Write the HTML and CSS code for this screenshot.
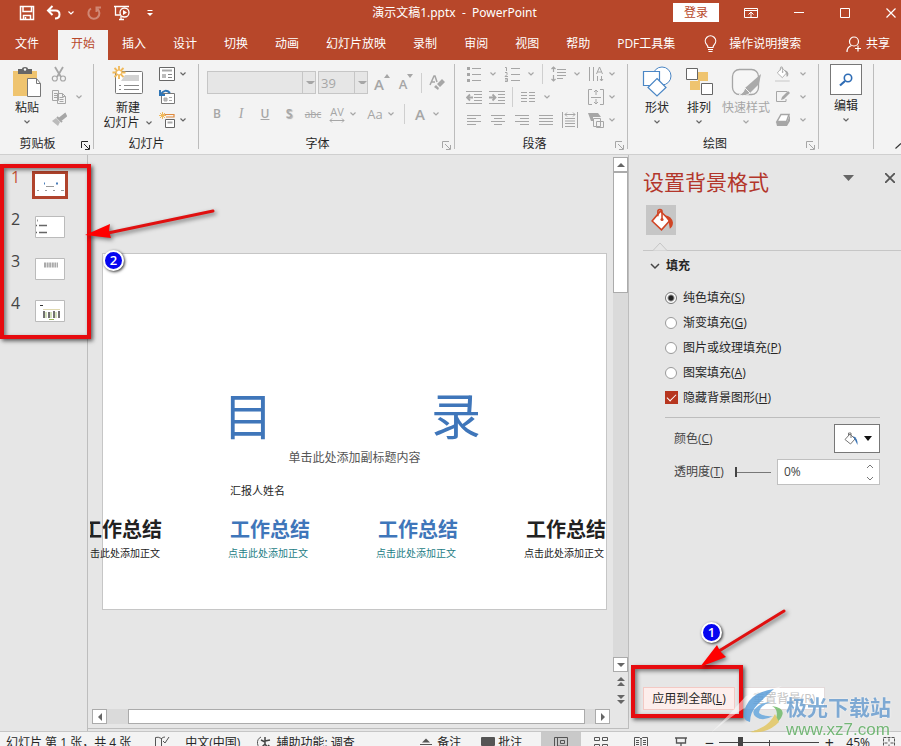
FILE: index.html
```html
<!DOCTYPE html>
<html lang="zh-CN">
  <head>
    <meta charset="utf-8">
    <meta name="viewport" content="width=device-width,initial-scale=1.0"/>
    <title>演示文稿1.pptx - PowerPoint</title>
    <link rel="stylesheet" href="styles.css">
  </head>

  <body>
    <!-- shared icons -->
    <svg class="defs" width="0" height="0">
      <symbol id="chev" viewBox="0 0 8 8"><path d="M1.5 2.5 4 5 6.5 2.5" fill="none" stroke="currentColor" stroke-width="1.2"/></symbol>
      <symbol id="launch" viewBox="0 0 9 9"><path d="M.5 7V.5H7M3 3l5 5M8.5 4v4.500H4" fill="none" stroke="currentColor"/></symbol>
      <symbol id="bucket" viewBox="0 0 24 24">
        <path d="M11 3 3 12.500l9 8.500 8-9z" fill="#fff" stroke="currentColor" stroke-width="1.500"/>
        <path d="M8.500 8V3.500q0-2 2-2t2 2V11" fill="none" stroke="currentColor" stroke-width="1.500"/>
        <circle cx="12.500" cy="11" r="1.500" fill="currentColor"/>
        <path d="M15 7q7 1 8 7 0 4-3 6-1-5-1-7z" fill="currentColor"/>
      </symbol>
    </svg>

    <div class="app">
      <!-- Title bar -->
      <header class="titlebar">
        <div class="quick">
          <button class="tb" aria-label="保存"><svg width="16" height="16" viewBox="0 0 16 16"><path d="M1.500 1.500h13v13h-13zM4 1.500v5h8.500v-5M4.500 14.500v-4h7v4M6.500 14v-2" fill="none" stroke="#fff" stroke-width="1.500"/></svg></button>
          <button class="tb undo" aria-label="撤消"><svg width="16" height="16" viewBox="0 0 16 16"><path d="M6.500 1 2 5.500 6.500 10M2 5.500h7.500q4 0 4 4t-4.500 4" fill="none" stroke="#fff" stroke-width="2"/></svg><svg width="8" height="8"><use href="#chev"/></svg></button>
          <button class="tb faded" aria-label="重复"><svg width="16" height="16" viewBox="0 0 16 16"><path d="M5 3.500a5.500 5.500 0 1 0 6.500.5M10.500 7V2.500H15" fill="none" stroke="#fff" stroke-width="2"/></svg></button>
          <button class="tb" aria-label="从头开始"><svg width="18" height="16" viewBox="0 0 18 16"><path d="M1 1.500h15M2.500 2v8h5M6 14.500h5M8 11v3" fill="none" stroke="#fff" stroke-width="1.300"/><circle cx="11.500" cy="7.500" r="4.500" fill="#b7472a" stroke="#fff" stroke-width="1.300"/><path d="m10 5 4 2.500L10 10z" fill="#fff"/></svg></button>
          <button class="tb more" aria-label="自定义快速访问工具栏"><svg width="8" height="8" viewBox="0 0 8 8"><path d="M1.500 1.500h5" stroke="#fff"/><path d="M1 4h6L4 7z" fill="#fff"/></svg></button>
        </div>
        <div class="doc-title">演示文稿1.pptx&nbsp; -&nbsp; PowerPoint</div>
        <div class="window-tools">
          <button class="login">登录</button>
          <button class="tb" aria-label="功能区显示选项"><svg width="14" height="12" viewBox="0 0 14 12"><path d="M.5 1.500h13v9H.5zM.5 3.500h13M7 10V5M4.500 7.500 7 5l2.500 2.500" fill="none" stroke="#fff"/></svg></button>
          <button class="tb" aria-label="最小化"><svg width="10" height="12" viewBox="0 0 10 12"><path d="M0 5.500h10" stroke="#fff"/></svg></button>
          <button class="tb" aria-label="最大化"><svg width="10" height="12" viewBox="0 0 10 12"><path d="M.5 1.500h9v9h-9z" fill="none" stroke="#fff"/></svg></button>
          <button class="tb" aria-label="关闭"><svg width="10" height="12" viewBox="0 0 10 12"><path d="m.5 1.500 9 9m0-9-9 9" stroke="#fff" stroke-width="1.200"/></svg></button>
        </div>
      </header>

      <!-- Ribbon tabs -->
      <nav class="tabs">
        <button class="tab file">文件</button>
        <button class="tab active">开始</button>
        <button class="tab">插入</button>
        <button class="tab">设计</button>
        <button class="tab">切换</button>
        <button class="tab">动画</button>
        <button class="tab">幻灯片放映</button>
        <button class="tab">录制</button>
        <button class="tab">审阅</button>
        <button class="tab">视图</button>
        <button class="tab">帮助</button>
        <button class="tab">PDF工具集</button>
        <button class="tab tell"><svg width="13" height="18" viewBox="0 0 13 18"><path d="M4 12.500Q4 11 2.500 9.300A5.200 5.200 0 1 1 10.500 9.300Q9 11 9 12.500zM4 14.500h5M4.500 16.500h4" fill="none" stroke="#fff" stroke-width="1.200"/></svg>操作说明搜索</button>
        <button class="tab share"><svg width="16" height="17" viewBox="0 0 16 17"><circle cx="8" cy="5.500" r="4.500" fill="none" stroke="#fff" stroke-width="1.200"/><path d="M1 16q0-5 4.500-6.500M12 9.500v6M9 12.500h6" fill="none" stroke="#fff" stroke-width="1.200"/></svg>共享</button>
      </nav>

      <!-- Ribbon -->
      <section class="ribbon">
        <div class="group clipboard">
          <div class="group-body">
            <button class="big">
              <svg width="30" height="32" viewBox="0 0 30 32"><path d="M1 5h24v25H1z" fill="#efc46f"/><path d="M6 3h4q0-2 3-2t3 2h4v5H6z" fill="#666"/><circle cx="13" cy="3.500" r="1.200" fill="#fff"/><path d="M15.500 12.500h9l4 5v13h-13z" fill="#fff" stroke="#777"/><path d="M24.500 12.500v5h4" fill="none" stroke="#777"/></svg>
              <span>粘贴</span>
              <svg class="chev" width="8" height="8"><use href="#chev"/></svg>
            </button>
            <div class="small-col">
              <div class="small-row"><button class="ib off" aria-label="剪切"><svg width="16" height="16" viewBox="0 0 16 16"><path d="M4 1l6 10M12 1 6 11" stroke="currentColor" stroke-width="1.800"/><circle cx="3.800" cy="12.500" r="2.500" fill="none" stroke="currentColor" stroke-width="1.200"/><circle cx="12" cy="12.500" r="2.500" fill="none" stroke="currentColor" stroke-width="1.200"/></svg></button></div>
              <div class="small-row"><button class="ib off" aria-label="复制"><svg width="16" height="16" viewBox="0 0 16 16"><path d="M1.500 1.500h6v10h-6zM6.500 4.500h5l3 3v7h-8z" fill="#f3f3f3" stroke="currentColor"/><path d="M3 4.500h3M3 6.500h3M3 8.500h3M8.500 8.500h4M8.500 10.500h4M8.500 12.500h4M11.500 4.500v3h3" fill="none" stroke="currentColor"/></svg></button><svg class="chev off" width="8" height="8"><use href="#chev"/></svg></div>
              <div class="small-row"><button class="ib off" aria-label="格式刷"><svg width="16" height="16" viewBox="0 0 16 16"><path d="m1 9 6 5 2-4-4-4z" fill="#bbb"/><path d="m6 5 5 5M8 7l1-1 5-4 1 2-5 4z" fill="currentColor" stroke="currentColor" stroke-width="2"/></svg></button></div>
            </div>
          </div>
          <div class="group-label"><span>剪贴板</span><svg class="launch" width="9" height="9"><use href="#launch"/></svg></div>
        </div>

        <div class="group slides">
          <div class="group-body">
            <button class="big wide">
              <svg width="32" height="32" viewBox="0 0 32 32"><rect x="3.500" y="5.500" width="27" height="22" rx="1" fill="#fff" stroke="#777"/><path d="M13 9h14v6H9z" fill="#d2d2d2"/><path d="M7 19.500h2M12 19.500h15M7 23.500h2M12 23.500h15" stroke="#888"/><path d="M7 0v13M.5 6.500h13M2.500 2l9 9M11.500 2l-9 9" stroke="#f0b95a" stroke-width="1.800"/><circle cx="7" cy="6.500" r="2.500" fill="#fff" stroke="#f0b95a"/></svg>
              <span>新建</span>
              <span class="with-chev">幻灯片 <svg class="chev" width="8" height="8"><use href="#chev"/></svg></span>
            </button>
            <div class="small-col">
              <div class="small-row"><button class="ib" aria-label="版式"><svg width="16" height="16" viewBox="0 0 16 16"><path d="M.5 1.500h15v13H.5z" fill="#fff" stroke="#666"/><path d="M3 4.500h10" stroke="#aaa" stroke-width="2"/><path d="M3 8h4v4H3z" fill="#bbb"/><path d="M9 8.500h4M9 11.500h4" stroke="#888"/></svg></button><svg class="chev" width="8" height="8"><use href="#chev"/></svg></div>
              <div class="small-row"><button class="ib" aria-label="重置"><svg width="16" height="16" viewBox="0 0 16 16"><path d="M2.500 4.500h13v10h-13z" fill="#fff" stroke="#777"/><path d="M5 9h3v3H5zM10 8.500h3M10 11.500h3" fill="#bbb" stroke="#aaa"/><path d="M1 1v5h5M1.500 5.500Q6-1 11 4" fill="none" stroke="#2e75b6" stroke-width="2"/></svg></button></div>
              <div class="small-row"><button class="ib" aria-label="节"><svg width="16" height="16" viewBox="0 0 16 16"><path d="M6 4V2.500h9V5H7" fill="none" stroke="#e08a3c" stroke-width="1.200"/><path d="M6.500 7.500h9v8h-9z" fill="#fff" stroke="#666"/><path d="M8.500 10.500h5" stroke="#aaa" stroke-width="2"/><path d="M3.500 0v7M0 3.500h7M1 1l5 5M6 1 1 6" stroke="#f0b95a"/></svg></button><svg class="chev" width="8" height="8"><use href="#chev"/></svg></div>
            </div>
          </div>
          <div class="group-label"><span>幻灯片</span></div>
        </div>

        <div class="group font">
          <div class="font-rows">
            <div class="row combos">
              <div class="combo font-name"><select disabled aria-label="字体"><option></option></select><i></i></div>
              <div class="combo font-size"><select disabled aria-label="字号"><option>39</option></select><i></i></div>
              <button class="lb off grow-a" aria-label="增大字号"><b>A</b><svg width="6" height="4" viewBox="0 0 6 4"><path d="m0 4 3-4 3 4z" fill="currentColor"/></svg></button>
              <button class="lb off shrink-a" aria-label="减小字号"><b>A</b><svg width="6" height="4" viewBox="0 0 6 4"><path d="m0 0 3 4 3-4z" fill="currentColor"/></svg></button>
              <span class="vsep"></span>
              <button class="lb off" aria-label="清除格式"><svg width="16" height="16" viewBox="0 0 16 16"><path d="m1 10 4-9h1l2 6M2.500 7H6" fill="none" stroke="currentColor" stroke-width="1.500"/><path d="m8 9 5-5 3 3-5 5zM7 10l3 3-1 2-4-3z" fill="currentColor"/></svg></button>
            </div>
            <div class="row">
              <button class="lb off"><b>B</b></button>
              <button class="lb off serif"><i>I</i></button>
              <button class="lb off"><b><u>U</u></b></button>
              <button class="lb off shadow"><b>S</b></button>
              <button class="lb off strike"><s>abc</s></button>
              <button class="lb off spacing" aria-label="字符间距"><span>AV</span><svg width="16" height="5" viewBox="0 0 16 5"><path d="M1 2.500h14M3 .5l-2 2 2 2M13 .5l2 2-2 2" fill="none" stroke="currentColor"/></svg></button>
              <svg class="chev off spaced" width="8" height="8"><use href="#chev"/></svg>
              <button class="lb off case">Aa</button>
              <svg class="chev off spaced" width="8" height="8"><use href="#chev"/></svg>
              <span class="vsep"></span>
              <button class="lb off color"><b>A</b></button>
              <svg class="chev off" width="8" height="8"><use href="#chev"/></svg>
            </div>
          </div>
          <div class="group-label"><span>字体</span><svg class="launch off" width="9" height="9"><use href="#launch"/></svg></div>
        </div>

        <div class="group paragraph">
          <div class="group-body">
            <div class="small-col lists">
              <div class="small-row">
                <button class="ib off" aria-label="项目符号"><svg width="16" height="16" viewBox="0 0 16 16"><path d="M6 2.500h9M6 8.500h9M6 14.500h9" stroke="currentColor"/><path d="M1 1h3v3H1zM1 7h3v3H1zM1 13h3v3H1z" fill="currentColor"/></svg></button>
                <svg class="chev off" width="8" height="8"><use href="#chev"/></svg>
                <button class="ib off" aria-label="编号"><svg width="16" height="16" viewBox="0 0 16 16"><path d="M7 2.500h9M7 8.500h9M7 14.500h9M1 1.500h1.500V5M1 6.500h2v2l-2 2h3M1 12.500h2.500v3H1M1 14h2" fill="none" stroke="currentColor"/></svg></button>
                <svg class="chev off" width="8" height="8"><use href="#chev"/></svg>
                <span class="vsep"></span>
                <button class="ib off" aria-label="行距"><svg width="16" height="16" viewBox="0 0 16 16"><path d="M7 3.500h9M7 6.500h9M7 9.500h9M7 12.500h6M3.500 1v5M1.500 3l2-2 2 2M3.500 9v6M1.500 13l2 2 2-2" fill="none" stroke="currentColor" stroke-width="1.200"/></svg></button>
                <svg class="chev off" width="8" height="8"><use href="#chev"/></svg>
              </div>
              <div class="small-row">
                <button class="ib off" aria-label="减少缩进"><svg width="16" height="16" viewBox="0 0 16 16"><path d="M0 2.500h16M8 5.500h8M8 8.500h8M8 11.500h8M0 14.500h16" stroke="currentColor"/><path d="M7 8.500H1M4 5.500l-3 3 3 3" fill="none" stroke="currentColor" stroke-width="1.800"/></svg></button>
                <button class="ib off" aria-label="增加缩进"><svg width="16" height="16" viewBox="0 0 16 16"><path d="M0 2.500h16M9 5.500h7M9 8.500h7M9 11.500h7M0 14.500h16" stroke="currentColor"/><path d="M0 8.500h6M3.500 5.500l3 3-3 3" fill="none" stroke="currentColor" stroke-width="1.800"/></svg></button>
                <span class="vsep"></span>
                <button class="ib off" aria-label="分栏"><svg width="16" height="16" viewBox="0 0 16 16"><path d="M1 3.500h6M1 6.500h6M1 9.500h6M1 12.500h6M9 3.500h6M9 6.500h6M9 9.500h6M9 12.500h6" stroke="currentColor"/></svg></button>
                <svg class="chev off" width="8" height="8"><use href="#chev"/></svg>
              </div>
              <div class="small-row aligns">
                <button class="ib off" aria-label="左对齐"><svg width="16" height="16" viewBox="0 0 16 16"><path d="M1 3.500h14M1 6.500h9M1 9.500h14M1 12.500h9" stroke="currentColor"/></svg></button>
                <button class="ib off" aria-label="居中"><svg width="16" height="16" viewBox="0 0 16 16"><path d="M1 3.500h14M4 6.500h8M1 9.500h14M4 12.500h8" stroke="currentColor"/></svg></button>
                <button class="ib off" aria-label="右对齐"><svg width="16" height="16" viewBox="0 0 16 16"><path d="M1 3.500h14M6 6.500h9M1 9.500h14M6 12.500h9" stroke="currentColor"/></svg></button>
                <button class="ib off" aria-label="两端对齐"><svg width="16" height="16" viewBox="0 0 16 16"><path d="M1 3.500h14M1 6.500h14M1 9.500h14M1 12.500h14" stroke="currentColor"/></svg></button>
                <button class="ib off" aria-label="分散对齐"><svg width="16" height="16" viewBox="0 0 16 16"><path d="M.5 0v16M15.500 0v16M3 6.500h10M3 9h10M3 11.500h10M3 14.500h10M3 2.500h10M5 .5l-2 2 2 2M11 .5l2 2-2 2" fill="none" stroke="currentColor"/></svg></button>
              </div>
            </div>
            <div class="small-col text-tools">
              <div class="small-row"><button class="ib off" aria-label="文字方向"><svg width="16" height="16" viewBox="0 0 16 16"><path d="M1.500 1v14M5.500 1v14M9.500 10v5M8.500 8l3-7 3 7M9.500 6h4M13.500 10v5M12 13l1.500 2 1.500-2" fill="none" stroke="currentColor"/></svg></button><svg class="chev off" width="8" height="8"><use href="#chev"/></svg></div>
              <div class="small-row"><button class="ib off" aria-label="对齐文本"><svg width="16" height="16" viewBox="0 0 16 16"><path d="M4 .5H.5v15H4M12 .5h3.500v15H12M3 8.500h10M8 1v5M6 3l2-2 2 2M8 10v5M6 13l2 2 2-2" fill="none" stroke="currentColor"/></svg></button><svg class="chev off" width="8" height="8"><use href="#chev"/></svg></div>
              <div class="small-row"><button class="ib off" aria-label="转换为 SmartArt"><svg width="16" height="16" viewBox="0 0 16 16"><path d="M0 1h10l3 4H5v4H3z" fill="currentColor"/><path d="M5.500 6.500h7v8h-7zM8.500 9.500h7v6h-7z" fill="#f3f3f3" stroke="currentColor"/></svg></button><svg class="chev off" width="8" height="8"><use href="#chev"/></svg></div>
            </div>
          </div>
          <div class="group-label"><span>段落</span><svg class="launch off" width="9" height="9"><use href="#launch"/></svg></div>
        </div>

        <div class="group drawing">
          <div class="group-body">
            <button class="big">
              <svg width="30" height="32" viewBox="0 0 30 32"><circle cx="20" cy="10" r="9" fill="#fff" stroke="#4a86c5"/><path d="M1.500 5.500h16v14h-16z" fill="#fff" stroke="#4a86c5" stroke-width="1.200"/><path d="m15 12.500 9 9-9 8.500-9-8.500z" fill="#fff" stroke="#4a86c5" stroke-width="1.200"/></svg>
              <span>形状</span>
              <svg class="chev" width="8" height="8"><use href="#chev"/></svg>
            </button>
            <button class="big">
              <svg width="28" height="32" viewBox="0 0 28 32"><path d="M13 6h10v9H13zM5 15h10v9H5z" fill="#efc46f"/><path d="M1.500 2.500h11v11h-11zM16.500 17.500h11v11h-11z" fill="#fff" stroke="#666"/></svg>
              <span>排列</span>
              <svg class="chev" width="8" height="8"><use href="#chev"/></svg>
            </button>
            <button class="big wide off">
              <svg width="32" height="32" viewBox="0 0 32 32"><rect x="2.500" y="3.500" width="26" height="25" rx="7" fill="#f6f6f6" stroke="currentColor" stroke-width="1.300"/><path d="m31 8-2 10-9 9-5-5z" fill="#aaa"/><path d="m15 22 5 5q-4 4-11 2 5-2 6-7z" fill="#aaa" stroke="#f3f3f3"/></svg>
              <span>快速样式</span>
              <svg class="chev off" width="8" height="8"><use href="#chev"/></svg>
            </button>
            <div class="small-col">
              <div class="small-row"><button class="ib off" aria-label="形状填充"><svg width="16" height="16" viewBox="0 0 24 24"><use href="#bucket" width="22" height="20"/><path d="M0 23h22" stroke="#ddd" stroke-width="4"/></svg></button><svg class="chev off" width="8" height="8"><use href="#chev"/></svg></div>
              <div class="small-row"><button class="ib off" aria-label="形状轮廓"><svg width="16" height="16" viewBox="0 0 16 16"><path d="M12 2.500H1.500v10H11V10" fill="none" stroke="currentColor"/><path d="m6 11 1-3 6-6 2 2-6 6z" fill="currentColor"/></svg></button><svg class="chev off" width="8" height="8"><use href="#chev"/></svg></div>
              <div class="small-row"><button class="ib off" aria-label="形状效果"><svg width="16" height="16" viewBox="0 0 16 16"><path d="M6 2.500h8L11.500 9.500H2z" fill="#fff" stroke="currentColor" stroke-width="1.500"/><path d="M1 10h11l3-7v6l-3 5H2z" fill="currentColor"/></svg></button><svg class="chev off" width="8" height="8"><use href="#chev"/></svg></div>
            </div>
          </div>
          <div class="group-label"><span>绘图</span><svg class="launch off" width="9" height="9"><use href="#launch"/></svg></div>
        </div>

        <div class="group edit">
          <button class="big">
            <span class="find-box"><svg width="14" height="14" viewBox="0 0 14 14"><circle cx="9" cy="5" r="3.700" fill="none" stroke="#2e6cb5" stroke-width="1.600"/><path d="m6 8-5 4.500" stroke="#2e6cb5" stroke-width="2.200"/></svg></span>
            <span>编辑</span>
            <svg class="chev" width="8" height="8"><use href="#chev"/></svg>
          </button>
        </div>
        <button class="collapse" aria-label="折叠功能区"><svg width="6" height="6" viewBox="0 0 6 6"><path d="M.5 5.500 6 .5" fill="none" stroke="#333" stroke-width="1.200"/></svg></button>
      </section>

      <main class="workspace">
        <!-- Slide thumbnails -->
        <aside class="thumbs">
          <div class="thumb current"><span>1</span><svg width="36" height="28" viewBox="0 0 36 28"><path d="M0 0h36v28H0z" fill="#b0432c"/><path d="M3 3h30v22H3z" fill="#fff"/><path d="M12 12.500h1M24 12.500h2" stroke="#4a7ebb" stroke-width="2"/><path d="M14 15.500h8M5 19.500h2M13 19.500h2M21 19.500h2M29 19.500h3" stroke="#999"/></svg></div>
          <div class="thumb"><span>2</span><svg width="30" height="22" viewBox="0 0 30 22"><path d="M.5.5h29v21H.5z" fill="#fff" stroke="#bbb"/><path d="M2.500 3.500v2" stroke="#999"/><path d="M1 9.500h1M4 9.500h8M1 16.500h1M4 16.500h8" stroke="#666" stroke-width="1.500"/></svg></div>
          <div class="thumb"><span>3</span><svg width="30" height="22" viewBox="0 0 30 22"><path d="M.5.5h29v21H.5z" fill="#fff" stroke="#bbb"/><path d="M9 7h14" stroke="#aaa" stroke-width="5" stroke-dasharray="2 .6"/></svg></div>
          <div class="thumb"><span>4</span><svg width="30" height="22" viewBox="0 0 30 22"><path d="M.5.5h29v21H.5z" fill="#fff" stroke="#bbb"/><path d="M5 5.500h3" stroke="#333"/><path d="M8 9.500h17" stroke="#e0d9b0"/><path d="M9 11v7M14 12v6M19 11v7M24 11v7" stroke="#444" stroke-width="1.500"/><path d="M11 12v6M16 12v6M21 12v6" stroke="#a8c47a"/><path d="M14 19.500h5" stroke="#9bbb59"/></svg></div>
          <div class="mark-box thumbs-mark"></div>
        </aside>

        <!-- Editing area -->
        <section class="editor">
          <div class="stage">
            <article class="slide">
              <h1><span>目</span><span>录</span></h1>
              <p class="subtitle">单击此处添加副标题内容</p>
              <p class="reporter">汇报人姓名</p>
              <div class="points">
                <div class="point"><h2>工作总结</h2><p>点击此处添加正文</p></div>
                <div class="point blue"><h2>工作总结</h2><p>点击此处添加正文</p></div>
                <div class="point blue"><h2>工作总结</h2><p>点击此处添加正文</p></div>
                <div class="point"><h2>工作总结</h2><p>点击此处添加正文</p></div>
              </div>
            </article>
            <div class="hscroll">
              <button class="sb" aria-label="向左"><svg width="6" height="8" viewBox="0 0 6 8"><path d="M5 0v8L1 4z" fill="#666"/></svg></button>
              <div class="htrack"><div class="hthumb"></div></div>
              <button class="sb" aria-label="向右"><svg width="6" height="8" viewBox="0 0 6 8"><path d="M1 0v8l4-4z" fill="#666"/></svg></button>
            </div>
          </div>
          <div class="vscroll">
            <button class="sb" aria-label="向上"><svg width="8" height="6" viewBox="0 0 8 6"><path d="M0 5h8L4 1z" fill="#666"/></svg></button>
            <div class="vtrack"><div class="vthumb"></div></div>
            <button class="sb" aria-label="向下"><svg width="8" height="6" viewBox="0 0 8 6"><path d="M0 1h8L4 5z" fill="#666"/></svg></button>
            <button class="page" aria-label="上一张"><svg width="8" height="9" viewBox="0 0 8 9"><path d="m0 4 4-4 4 4zM0 9l4-4 4 4z" fill="#666"/></svg></button>
            <button class="page" aria-label="下一张"><svg width="8" height="9" viewBox="0 0 8 9"><path d="m0 0 4 4 4-4zM0 5l4 4 4-4z" fill="#666"/></svg></button>
          </div>
          <svg class="arrow arrow-thumbs" width="136" height="40" viewBox="0 0 136 40"><path d="M129 6 24 28" stroke="#e01010" stroke-width="3" stroke-linecap="round"/><path d="M1 30 26 19l-1 7 2 7z" fill="#f00"/></svg>
          <span class="badge badge-two">2</span>
        </section>

        <!-- Format background pane -->
        <aside class="pane">
          <div class="pane-head">
            <h3>设置背景格式</h3>
            <button class="plain" aria-label="任务窗格选项"><svg width="11" height="6" viewBox="0 0 11 6"><path d="M0 0h11L5.500 6z" fill="#666"/></svg></button>
            <button class="plain" aria-label="关闭窗格"><svg width="10" height="10" viewBox="0 0 10 10"><path d="m0 0 10 10m0-10L0 10" stroke="#555" stroke-width="1.800"/></svg></button>
          </div>
          <button class="fill-tab" aria-label="填充"><svg width="25" height="25" viewBox="0 0 24 24"><use href="#bucket"/></svg></button>
          <div class="notch"><svg width="14" height="9" viewBox="0 0 14 9"><path d="M0 8.500 7 1l7 7.500" fill="#e6e6e6" stroke="#c6c6c6"/></svg></div>

          <button class="section-head"><svg width="10" height="7" viewBox="0 0 10 7"><path d="m1 1 4 4 4-4" fill="none" stroke="#444" stroke-width="1.500"/></svg>填充</button>
          <div class="options">
            <label><input type="radio" name="fill" checked/>纯色填充(<u>S</u>)</label>
            <label><input type="radio" name="fill"/>渐变填充(<u>G</u>)</label>
            <label><input type="radio" name="fill"/>图片或纹理填充(<u>P</u>)</label>
            <label><input type="radio" name="fill"/>图案填充(<u>A</u>)</label>
            <label><input type="checkbox" checked/>隐藏背景图形(<u>H</u>)</label>
          </div>
          <div class="fields">
            <div class="field">
              <label for="color">颜色(<u>C</u>)</label>
              <button id="color" class="color-btn"><svg class="color-icon" width="16" height="16" viewBox="0 0 16 16"><path d="M7 3 2 8.500 7.500 13 12 8z" fill="#fff" stroke="#777"/><path d="M5.500 5V2H8v5" fill="none" stroke="#777"/><path d="M10 5q5 2 4.500 9L12 9z" fill="#3b74b5"/></svg><svg width="8" height="5" viewBox="0 0 8 5"><path d="M0 0h8L4 5z" fill="#111"/></svg></button>
            </div>
            <div class="field">
              <label for="opacity">透明度(<u>T</u>)</label>
              <input class="range" type="range" min="0" max="100" value="0" aria-label="透明度滑块"/>
              <div class="spin">
                <input id="opacity" type="text" value="0%"/>
                <div class="spin-btns">
                  <button aria-label="增加"><svg width="8" height="5" viewBox="0 0 8 5"><path d="m1 4 3-3 3 3" fill="none" stroke="#777"/></svg></button>
                  <button aria-label="减少"><svg width="8" height="5" viewBox="0 0 8 5"><path d="m1 1 3 3 3-3" fill="none" stroke="#777"/></svg></button>
                </div>
              </div>
            </div>
          </div>

          <div class="pane-foot">
            <button class="apply">应用到全部(<u>L</u>)</button>
            <button class="reset">重置背景(<u>R</u>)</button>
          </div>

          <div class="mark-box pane-mark"></div>
          <svg class="arrow arrow-apply" width="92" height="66" viewBox="0 0 92 66"><path d="M85 6 20 46" stroke="#e01010" stroke-width="3" stroke-linecap="round"/><path d="M1 62 18 40l3 6 6 6z" fill="#f00"/></svg>
          <span class="badge badge-one">1</span>
        </aside>
      </main>

      <!-- Status bar -->
      <footer class="status">
        <span class="slide-no">幻灯片 第 1 张，共 4 张</span>
        <svg class="spell" width="16" height="14" viewBox="0 0 16 14"><path d="M7.500 2v11M7.500 2.500Q4 .5 1.500 1.500v10q3-1 6 1 2-1.500 6-1M7.500 2.500Q9 1 11 1" fill="none" stroke="#555"/><path d="m9 5 2 2 4-6" fill="none" stroke="#555"/></svg>
        <span class="lang">中文(中国)</span>
        <svg class="access" width="16" height="14" viewBox="0 0 16 14"><path d="M5 1Q1 3 1.500 7.500T7 13" fill="none" stroke="#555"/><path d="M9 1v7l-3 3M9 5l5-1M9 8l3 4M5 4l4 2M12 9l2 2" fill="none" stroke="#444" stroke-width="1.500"/></svg>
        <span>辅助功能: 调查</span>
        <span class="grow"></span>
        <button class="st"><svg width="12" height="10" viewBox="0 0 12 10"><path d="M2 4.500 6 .5l4 4z" fill="#555"/><path d="M0 6.500h12M0 9.500h12" stroke="#555"/></svg>备注</button>
        <button class="st notes"><svg width="14" height="14" viewBox="0 0 14 14"><path d="M1 1h12q1 0 1 1v7q0 1-1 1H8l-3 4v-4H1q-1 0-1-1V2q0-1 1-1z" fill="#555"/></svg>批注</button>
        <button class="view on" aria-label="普通"><svg width="14" height="12" viewBox="0 0 14 12"><path d="M.5.500h13v11H.5zM3.500 1v10M6.500 3.500h4v3h-4zM4 9h9" fill="none" stroke="#555"/></svg></button>
        <button class="view" aria-label="浏览"><svg width="14" height="12" viewBox="0 0 14 12"><path d="M.5.500h5v3h-5zM8.500.5h5v3h-5zM.5 7.500h5v3h-5zM8.500 7.500h5v3h-5z" fill="none" stroke="#555"/></svg></button>
        <button class="view" aria-label="阅读"><svg width="14" height="12" viewBox="0 0 14 12"><path d="M.5.500h5L7 2 8.500.5h5v10h-5L7 12l-1.500-1.500h-5zM7 2v9M2 3.500h3M2 5.500h3M2 7.500h3M9 3.500h3M9 5.500h3M9 7.500h3" fill="none" stroke="#555"/></svg></button>
        <button class="view" aria-label="放映"><svg width="14" height="12" viewBox="0 0 14 12"><path d="M1 1h12M2.500 1v5h9V1M7 6v5M4 11h6" fill="none" stroke="#555" stroke-width="1.300"/></svg></button>
        <button class="zoom-btn" aria-label="缩小">−</button>
        <input class="zoom" type="range" min="0" max="100" value="20" aria-label="显示比例"/>
        <button class="zoom-btn" aria-label="放大">+</button>
        <span class="percent">45%</span>
        <svg class="fit" width="12" height="12" viewBox="0 0 12 12"><path d="M.5.500h11v11H.5zM6 1.500v3M6 7.500v3M1.500 6h3M7.500 6h3" fill="none" stroke="#555" stroke-dasharray="3 1"/></svg>
      </footer>

      <!-- Watermark -->
      <div class="watermark">
        <svg width="76" height="56" viewBox="0 0 76 56">
          <path d="M2 48Q20 30 36 12L72 2 48 16Q26 28 2 48z" fill="#fff" opacity=".6"/>
          <path d="M64 5Q42 8 36 22T40 38Q40 28 48 20T64 5z" fill="#5c9fda"/>
          <path d="M44 26q6-8 17-8-11 3-12 11 5 4 14 3-10 6-17 1-4-3-2-7z" fill="#68a8de"/>
          <path d="M62 22q15 2 9 12T40 48q23-6 26-14t-4-12z" fill="#72bb6b"/>
          <path d="M40 48q18 2 29-10l-4-8Q58 44 40 48z" fill="#e3c763"/>
        </svg>
        <div class="wm-text"><strong>极光下载站</strong><span>www.xz7.com</span></div>
      </div>
    </div>
  </body>
</html>
```
FILE: styles.css
```css
* {
  box-sizing: border-box;
  margin: 0;
  padding: 0;
}
html, body {
  height: 100%;
  overflow: hidden;
}
body {
  font-family: "Open Sans", "Noto Sans CJK SC", sans-serif;
  font-size: 12px;
  line-height: 16px;
  color: #262626;
  background: #e6e6e6;
}
button, input, select {
  font: inherit;
  color: inherit;
}
button {
  display: flex;
  align-items: center;
  justify-content: center;
  border: 0;
  background: none;
  white-space: nowrap;
}
svg {
  display: block;
  flex: none;
}
.defs {
  position: absolute;
}
.app {
  position: relative;
  display: flex;
  flex-direction: column;
  /* the status bar runs off the bottom edge of the window */
  height: calc(100vh + 7px);
}

/* Title bar */
.titlebar {
  display: grid;
  grid-template-columns: 1fr auto 1fr;
  align-items: center;
  height: 30px;
  padding-bottom: 5px;
  background: #b7472a;
  color: #fff;
}
.quick {
  display: flex;
  align-items: center;
  gap: 11px;
  padding-left: 19px;
}
.undo {
  gap: 5px;
}
.faded {
  opacity: .35;
}
.more {
  padding-left: 4px;
}
.doc-title {
  padding-left: 8px;
  font-family: "Noto Sans", "Noto Sans CJK SC", sans-serif;
}
.window-tools {
  display: flex;
  align-items: center;
  justify-content: flex-end;
  gap: 36px;
  padding-right: 5px;
}
.window-tools .login {
  width: 46px;
  height: 19px;
  margin-right: -11px;
  background: #fff;
  color: #b7472a;
}

/* Ribbon tabs */
.tabs {
  display: flex;
  gap: 1px;
  height: 30px;
  padding: 0 11px 0 2px;
  background: #b7472a;
}
.tab {
  padding: 0 13px 2px;
  color: #fff;
}
.tab.file {
  margin-right: 5px;
}
.tab.active {
  background: #f3f3f3;
  color: #b7472a;
}
.tab.tell {
  gap: 12px;
  padding-left: 15px;
}
.tab.share {
  gap: 4px;
  margin-left: auto;
  padding-right: 0;
}

/* Ribbon */
.ribbon {
  display: flex;
  height: 95px;
  padding: 4px 0 5px;
  border-bottom: 1px solid #cfcfcf;
  background: #f3f3f3;
}
.group {
  display: flex;
  flex: none;
  flex-direction: column;
  justify-content: space-between;
  border-right: 1px solid #bcbcbc;
}
.clipboard {
  width: 94px;
  padding-left: 6px;
}
.slides {
  width: 105px;
  padding-left: 8px;
}
.font {
  width: 256px;
  padding-left: 6px;
}
.paragraph {
  width: 173px;
  padding-left: 11px;
}
.drawing {
  width: 191px;
  padding-left: 8px;
}
.edit {
  width: 55px;
  align-items: center;
}
.group-body {
  display: flex;
}
.group-label {
  display: flex;
  align-items: flex-end;
  margin-bottom: -1px;
  padding-right: 3px;
}
.group-label span {
  flex: 1;
  padding-right: 12px;
  line-height: 13px;
  text-align: center;
}
.slides .group-label span {
  padding-right: 4px;
}
.big {
  flex-direction: column;
  justify-content: flex-start;
  width: 42px;
  padding-top: 2px;
  line-height: 15px;
}
.big svg + span {
  margin-top: 2px;
}
.big > .chev {
  margin-top: 3px;
}
.big.wide {
  width: 52px;
}
.with-chev {
  display: flex;
  align-items: center;
  gap: 5px;
}
.chev {
  color: #666;
}
.off {
  color: #a6a6a6;
}
.small-col {
  display: flex;
  flex-direction: column;
  gap: 7px;
  padding: 2px 0 0 3px;
}
.small-row {
  display: flex;
  align-items: center;
  gap: 8px;
  height: 16px;
}
.slides .small-row, .text-tools .small-row {
  gap: 4px;
}
.slides .small-col {
  padding-left: 5px;
}
.lists {
  width: 119px;
  padding-left: 0;
}
.lists .small-row {
  gap: 7px;
}
.lists .aligns {
  gap: 8px;
}
.vsep {
  flex: none;
  width: 1px;
  height: 20px;
  background: #cfcfcf;
}
.font-rows {
  display: flex;
  flex-direction: column;
  gap: 8px;
  padding-top: 7px;
}
.row {
  display: flex;
  align-items: center;
  height: 23px;
}
.row .vsep {
  margin: 0 3px;
}
.combos {
  padding-left: 2px;
}
.combo {
  display: flex;
  align-self: stretch;
  margin-right: 2px;
  border: 1px solid #c6c6c6;
  background: #e6e6e6;
}
.font-name {
  width: 109px;
}
.font-size {
  width: 50px;
}
.combo select {
  flex: 1;
  min-width: 0;
  padding-left: 2px;
  border: 0;
  background: none;
  color: #a6a6a6;
  font-size: 13px;
  opacity: 1;
  appearance: none;
}
.combo i {
  width: 13px;
  border-left: 1px solid #c6c6c6;
}
.combo i::after {
  content: "";
  display: block;
  margin: 9px 0 0 3px;
  border: 3px solid transparent;
  border-top-color: #a6a6a6;
}
.lb {
  flex: none;
  width: 24px;
  height: 23px;
}
.lb b {
  font-weight: 600;
}
.grow-a, .shrink-a {
  align-items: flex-start;
  padding-top: 3px;
  font-size: 15px;
  line-height: 20px;
}
.shrink-a {
  font-size: 13px;
}
.lb.serif {
  font-family: "Liberation Serif", serif;
  font-size: 14px;
}
.lb.shadow {
  text-shadow: 1px 1px 1px #aaa;
}
.lb.strike {
  font-size: 10px;
}
.lb.spacing {
  flex-direction: column;
  font-size: 11px;
  line-height: 13px;
}
.lb.case {
  font-size: 13px;
}
.lb.color {
  font-size: 15px;
}
.spaced {
  margin-right: 6px;
}
.find-box {
  display: flex;
  align-items: center;
  justify-content: center;
  width: 32px;
  height: 31px;
  margin-bottom: 3px;
  border: 1px solid #777;
  background: #fff;
}
.edit .big {
  padding-top: 0;
}
.collapse {
  align-self: flex-end;
  margin-left: auto;
}

/* Workspace */
.workspace {
  display: flex;
  flex: 1;
  min-height: 0;
}
.thumbs {
  position: relative;
  display: flex;
  flex: none;
  flex-direction: column;
  gap: 14px;
  width: 88px;
  padding: 16px 0 0 11px;
  border-right: 1px solid #bdbdbd;
}
.thumb {
  display: flex;
  align-items: center;
  height: 28px;
  color: #444;
}
.thumb span {
  align-self: flex-start;
  width: 21px;
  font-size: 16px;
  line-height: 12px;
}
.thumb svg {
  margin-left: 3px;
}
.thumb.current {
  color: #c8553a;
}
.thumb.current svg {
  margin-left: 0;
}

.editor {
  position: relative;
  display: flex;
  flex: 1;
  min-width: 0;
  margin-bottom: 2px;
  border-right: 1px solid #bdbdbd;
  border-bottom: 1px solid #bdbdbd;
}
.stage {
  display: flex;
  flex: 1;
  flex-direction: column;
  justify-content: space-between;
  min-width: 0;
  margin: 0 2px;
  padding: 98px 0 4px;
  overflow: hidden;
}
.slide {
  height: 357px;
  margin: 0 4px 0 12px;
  padding-top: 132px;
  border: 1px solid #c6c6c6;
  background: #fff;
}
.slide h1 {
  display: flex;
  justify-content: space-between;
  width: 258px;
  margin-left: 120px;
  font-size: 50px;
  font-weight: 400;
  line-height: 60px;
  color: #3f76ba;
}
.subtitle {
  padding-top: 2px;
  line-height: 20px;
  text-align: center;
  color: #555;
}
.reporter {
  margin: 15px 0 18px 127px;
  font-size: 11px;
  line-height: 16px;
}
/* the first and last columns hang over the slide edges */
.points {
  display: flex;
  gap: 66px;
  margin-left: -23px;
}
.point {
  flex: none;
  width: 82px;
  color: #222;
}
.point h2 {
  padding-left: 2px;
  font-size: 20px;
  line-height: 26px;
}
.point p {
  font-size: 10px;
  line-height: 20px;
  white-space: nowrap;
}
.point.blue h2 {
  color: #3f76ba;
}
.point.blue p {
  color: #1d7d86;
}
.sb {
  flex: none;
  width: 15px;
  height: 15px;
  border: 1px solid #ababab;
  background: #fff;
}
.hscroll {
  display: flex;
  padding: 0 1px 0 2px;
}
.htrack {
  flex: 1;
  padding: 0 10px 0 21px;
  background: #dadada;
}
.hthumb {
  height: 15px;
  border: 1px solid #ababab;
  background: #fff;
}
.vscroll {
  display: flex;
  flex: none;
  flex-direction: column;
  width: 15px;
  padding: 2px 0 20px;
}
.vtrack {
  flex: 1;
  background: #dadada;
}
.vthumb {
  height: 121px;
  border: 1px solid #ababab;
  background: #fff;
}
.page {
  height: 18px;
}

/* Format background pane */
.pane {
  position: relative;
  display: flex;
  flex: none;
  flex-direction: column;
  width: 272px;
  padding: 11px 0 21px 14px;
}
.pane-head {
  display: flex;
  align-items: center;
  padding-right: 6px;
}
.pane-head h3 {
  flex: 1;
  font-size: 21px;
  font-weight: 400;
  line-height: 32px;
  color: #b3362b;
}
.plain {
  padding: 0 0 8px 31px;
}
.fill-tab {
  width: 30px;
  height: 30px;
  margin: 7px 0 0 3px;
  background: #c6c6c6;
  color: #d04525;
}
.notch {
  height: 16px;
  padding: 7px 0 0 10px;
  border-bottom: 1px solid #c6c6c6;
}
.section-head {
  align-self: flex-start;
  gap: 6px;
  margin: 7px 0 11px 7px;
  font-weight: 700;
}
.options {
  margin: 0 21px 0 22px;
  padding-bottom: 7px;
  border-bottom: 1px solid #bdbdbd;
}
.options label {
  display: flex;
  align-items: center;
  height: 25px;
}
.options input {
  width: 12px;
  height: 12px;
  margin-right: 6px;
  border: 1px solid #9a9a9a;
  border-radius: 50%;
  background: #fff;
  appearance: none;
}
.options input[type=radio]:checked {
  border-color: #777;
  background: radial-gradient(#222 2px, #fff 4px);
}
.options input[type=checkbox] {
  display: flex;
  align-items: center;
  justify-content: center;
  width: 13px;
  height: 13px;
  margin-right: 5px;
  border: 0;
  border-radius: 0;
  background: #b7361f;
}
.options input[type=checkbox]::after {
  content: "";
  width: 8px;
  height: 4px;
  margin-bottom: 2px;
  border: solid #fff;
  border-width: 0 0 1px 1px;
  transform: rotate(-45deg);
}
.fields {
  display: flex;
  flex-direction: column;
  gap: 6px;
  padding: 6px 21px 0 31px;
}
.field {
  display: flex;
  align-items: center;
  justify-content: space-between;
  color: #444;
}
.color-btn {
  gap: 5px;
  width: 46px;
  height: 29px;
  border: 1px solid #777;
  background: #fff;
}
.range {
  width: 36px;
  height: 12px;
  margin-left: 5px;
  background: linear-gradient(#777, #777) center / 100% 1px no-repeat;
  appearance: none;
}
.range::-webkit-slider-thumb {
  width: 2px;
  height: 10px;
  background: #444;
  appearance: none;
}
.spin {
  display: flex;
  width: 103px;
  height: 26px;
  border: 1px solid #c0c0c0;
  background: #fff;
}
.spin input {
  flex: 1;
  min-width: 0;
  padding-left: 6px;
  border: 0;
  background: none;
}
.spin-btns {
  display: flex;
  flex-direction: column;
  justify-content: space-around;
  width: 17px;
}
.pane-foot {
  display: flex;
  gap: 8px;
  margin-top: auto;
}
.pane-foot button {
  height: 23px;
  border: 1px solid #e3dada;
}
.pane-foot .apply {
  width: 92px;
  border-color: #f3c9c4;
  background: #fdeeec;
}
.pane-foot .reset {
  width: 82px;
  background: #fff;
  color: #c4c4c4;
}

/* Red call-outs drawn over the window */
.mark-box {
  position: absolute;
  z-index: 2;
  border: 4px solid #e60b0f;
  box-shadow: 2px 2px 4px rgba(0, 0, 0, .6), inset 2px 2px 4px rgba(0, 0, 0, .5);
  pointer-events: none;
}
.thumbs-mark {
  top: 9px;
  left: 0;
  width: 91px;
  height: 175px;
}
.pane-mark {
  bottom: 13px;
  left: 2px;
  width: 112px;
  height: 53px;
}
.arrow {
  position: absolute;
  z-index: 3;
  filter: drop-shadow(2px 2px 2px rgba(0, 0, 0, .5));
}
.arrow-thumbs {
  top: 50px;
  left: -4px;
}
.arrow-apply {
  bottom: 60px;
  left: 70px;
}
.badge {
  position: absolute;
  z-index: 3;
  width: 21px;
  height: 21px;
  border: 2px solid #fff;
  border-radius: 50%;
  background: #0505f0;
  box-shadow: 1px 1px 3px rgba(0, 0, 0, .8);
  color: #fff;
  font-size: 13px;
  font-weight: 600;
  line-height: 17px;
  text-align: center;
}
.badge-two {
  top: 95px;
  left: 15px;
}
.badge-one {
  bottom: 88px;
  left: 72px;
}

/* Status bar */
.status {
  display: flex;
  flex: none;
  align-items: center;
  height: 22px;
  padding: 0 6px;
  border-top: 1px solid #c6c6c6;
  background: #f3f3f3;
  white-space: nowrap;
}
.spell {
  margin: 0 15px 0 23px;
}
.access {
  margin: 0 4px 0 16px;
}
.grow {
  flex: 1;
}
.st {
  gap: 5px;
}
.st.notes {
  gap: 3px;
  margin: 0 19px 0 20px;
}
.view {
  width: 40px;
  height: 21px;
}
.view.on {
  background: #c9c9c9;
}
.zoom-btn {
  width: 16px;
  font-size: 16px;
}
.zoom {
  width: 100px;
  height: 14px;
  margin: 0 2px;
  background: linear-gradient(#444, #444) center / 100% 1px no-repeat, linear-gradient(#444, #444) center / 1px 6px no-repeat;
  appearance: none;
}
.zoom::-webkit-slider-thumb {
  width: 5px;
  height: 12px;
  background: #444;
  appearance: none;
}
.percent {
  margin: 0 13px 0 9px;
}

/* Watermark */
.watermark {
  position: absolute;
  right: 10px;
  bottom: 13px;
  z-index: 4;
  display: flex;
  align-items: flex-end;
  opacity: .85;
  pointer-events: none;
}
.wm-text {
  display: flex;
  flex-direction: column;
  font-family: "Liberation Sans", "Noto Sans CJK SC", sans-serif;
  text-shadow: 0 0 2px #fff;
}
.wm-text strong {
  font-size: 21px;
  line-height: 24px;
  color: #6c9fd0;
}
.wm-text span {
  font-size: 17px;
  line-height: 20px;
  color: #5fae62;
}
```
